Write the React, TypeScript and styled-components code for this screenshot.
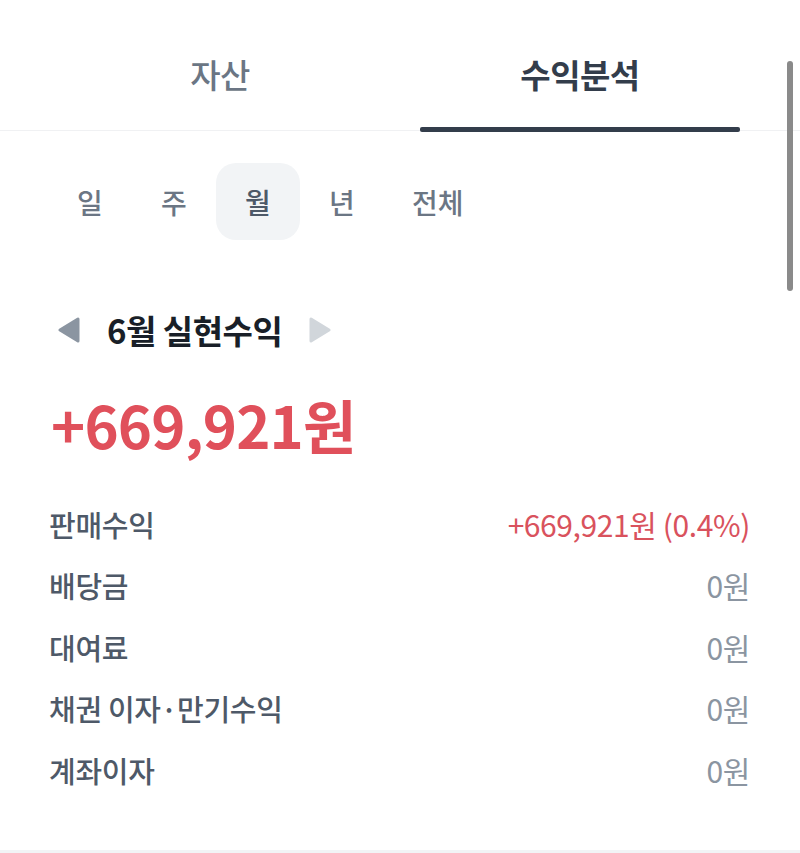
import React, { useState } from "react";
import styled, { createGlobalStyle } from "styled-components";

const Global = createGlobalStyle`
  html, body { margin: 0; padding: 0; background: #ffffff; }
  body {
    font-family: "Noto Sans CJK KR", "Noto Sans", "Liberation Sans", sans-serif;
    -webkit-font-smoothing: antialiased;
    overflow: hidden;
  }
  * { box-sizing: border-box; }
`;

const Page = styled.div`
  position: relative;
  width: 800px;
  height: 853px;
  overflow: hidden;
  background: #fff;
`;

const TabBar = styled.div`
  display: flex;
  gap: 40px;
  padding: 18px 60px 0;
  border-bottom: 1px solid #f0f1f3;
`;

const Tab = styled.div<{ $active?: boolean }>`
  position: relative;
  flex: 1;
  height: 112px;
  display: flex;
  align-items: center;
  justify-content: center;
  font-size: 33px;
  font-weight: ${(p) => (p.$active ? 700 : 500)};
  letter-spacing: -0.5px;
  color: ${(p) => (p.$active ? "#333d4b" : "#6b7684")};
  &::after {
    content: "";
    display: ${(p) => (p.$active ? "block" : "none")};
    position: absolute;
    left: 0;
    right: 0;
    bottom: -2px;
    height: 5px;
    border-radius: 2px;
    background: #333d4b;
  }
`;

const Content = styled.div`
  padding: 0 50px 0 49px;
`;

const PeriodRow = styled.div`
  display: flex;
  margin-top: 32px;
  margin-left: -1px;
`;

const Chip = styled.div<{ $active?: boolean }>`
  height: 77px;
  min-width: 84px;
  padding: 0 28px;
  display: flex;
  align-items: center;
  justify-content: center;
  border-radius: 20px;
  font-size: 28px;
  font-weight: 500;
  color: ${(p) => (p.$active ? "#4e5968" : "#6b7684")};
  background: ${(p) => (p.$active ? "#f2f4f6" : "transparent")};
`;

const Heading = styled.div`
  display: flex;
  align-items: center;
  gap: 26px;
  height: 40px;
  margin-top: 70px;
  padding-left: 8px;
`;

const HeadingText = styled.div`
  font-size: 33px;
  font-weight: 700;
  color: #191f28;
  letter-spacing: -0.5px;
`;

const Amount = styled.div`
  margin-top: 38px;
  height: 72px;
  display: flex;
  align-items: center;
  font-size: 58px;
  font-weight: 700;
  color: #e0505b;
  letter-spacing: -0.8px;
  padding-left: 2px;
`;

const List = styled.div`
  margin-top: 33px;
  display: flex;
  flex-direction: column;
`;

const Row = styled.div`
  height: 61.5px;
  display: flex;
  align-items: center;
  justify-content: space-between;
`;

const Label = styled.div`
  font-size: 29px;
  font-weight: 500;
  color: #4e5968;
  letter-spacing: -0.3px;
`;

const Value = styled.div<{ $positive?: boolean }>`
  font-size: 30px;
  font-weight: 400;
  letter-spacing: -0.4px;
  color: ${(p) => (p.$positive ? "#d9525d" : "#8b95a1")};
`;

const Divider = styled.div`
  position: absolute;
  left: 0;
  right: 0;
  top: 850px;
  height: 12px;
  background: #f2f4f6;
`;

const ScrollThumb = styled.div`
  position: absolute;
  left: 787px;
  top: 61px;
  width: 6px;
  height: 230px;
  border-radius: 3px;
  background: #8a8a8a;
`;

const Arrow = ({ dir, color }: { dir: "left" | "right"; color: string }) => (
  <svg width="24" height="26" viewBox="0 0 24 26">
    {dir === "left" ? (
      <polygon points="21,2 21,24 3,13" fill={color} stroke={color} strokeWidth="3" strokeLinejoin="round" />
    ) : (
      <polygon points="3,2 3,24 21,13" fill={color} stroke={color} strokeWidth="3" strokeLinejoin="round" />
    )}
  </svg>
);

const periods = ["일", "주", "월", "년", "전체"];

const rows: { label: string; value: string; positive?: boolean }[] = [
  { label: "판매수익", value: "+669,921원 (0.4%)", positive: true },
  { label: "배당금", value: "0원" },
  { label: "대여료", value: "0원" },
  { label: "채권 이자·만기수익", value: "0원" },
  { label: "계좌이자", value: "0원" },
];

export default function App() {
  const [period] = useState("월");
  return (
    <Page>
      <Global />
      <TabBar>
        <Tab>자산</Tab>
        <Tab $active>수익분석</Tab>
      </TabBar>
      <Content>
        <PeriodRow>
          {periods.map((p) => (
            <Chip key={p} $active={p === period}>
              {p}
            </Chip>
          ))}
        </PeriodRow>
        <Heading>
          <Arrow dir="left" color="#8b95a1" />
          <HeadingText>6월 실현수익</HeadingText>
          <Arrow dir="right" color="#d1d6db" />
        </Heading>
        <Amount>+669,921원</Amount>
        <List>
          {rows.map((r) => (
            <Row key={r.label}>
              <Label>{r.label}</Label>
              <Value $positive={r.positive}>{r.value}</Value>
            </Row>
          ))}
        </List>
      </Content>
      <Divider />
      <ScrollThumb />
    </Page>
  );
}
